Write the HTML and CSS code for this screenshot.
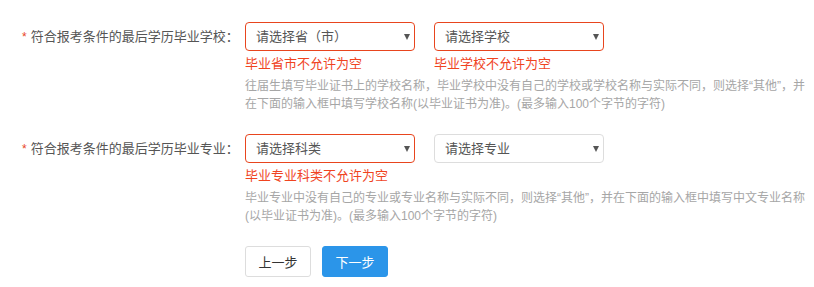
FILE: index.html
```html
<!DOCTYPE html>
<html lang="zh-CN">

<head>
  <meta charset="utf-8">
  <title>毕业信息</title>
  <link rel="stylesheet" href="styles.css">
</head>

<body>
  <form class="form">
    <div class="row">
      <label class="label"><span class="star">*</span>符合报考条件的最后学历毕业学校：</label>
      <div class="field">
        <div class="selects">
          <div class="pick">
            <div class="select error"><span>请选择省（市）</span><i class="caret"></i></div>
            <p class="msg">毕业省市不允许为空</p>
          </div>
          <div class="pick">
            <div class="select error"><span>请选择学校</span><i class="caret"></i></div>
            <p class="msg">毕业学校不允许为空</p>
          </div>
        </div>
        <p class="help">往届生填写毕业证书上的学校名称，毕业学校中没有自己的学校或学校名称与实际不同，则选择“其他”，并在下面的输入框中填写学校名称(以毕业证书为准)。(最多输入100个字节的字符)</p>
      </div>
    </div>
    <div class="row">
      <label class="label"><span class="star">*</span>符合报考条件的最后学历毕业专业：</label>
      <div class="field">
        <div class="selects">
          <div class="pick">
            <div class="select error"><span>请选择科类</span><i class="caret"></i></div>
            <p class="msg">毕业专业科类不允许为空</p>
          </div>
          <div class="pick">
            <div class="select"><span>请选择专业</span><i class="caret"></i></div>
          </div>
        </div>
        <p class="help">毕业专业中没有自己的专业或专业名称与实际不同，则选择“其他”，并在下面的输入框中填写中文专业名称(以毕业证书为准)。(最多输入100个字节的字符)</p>
      </div>
    </div>
    <div class="actions">
      <button type="button" class="btn">上一步</button>
      <button type="button" class="btn primary">下一步</button>
    </div>
  </form>
</body>

</html>
```

FILE: styles.css
```css
html,
body {
  margin: 0;
  background: #fff;
}

body {
  font-family: "Liberation Sans", "Noto Sans CJK SC", sans-serif;
  font-size: 13px;
  color: #555;
}

.form {
  padding-top: 22px;
}

.row {
  display: flex;
  margin-bottom: 21px;
}

.label {
  width: 245px;
  box-sizing: border-box;
  padding-left: 22px;
  line-height: 29px;
  color: #555;
  flex-shrink: 0;
}

.star {
  color: #e8451e;
  margin-right: 4px;
  font-size: 12px;
}

.field {
  width: 565px;
}

.selects {
  display: flex;
  gap: 19px;
}

.pick {
  width: 170px;
}

.select {
  height: 29px;
  box-sizing: border-box;
  border: 1px solid #ddd;
  border-radius: 4px;
  padding: 0 4px 0 10px;
  display: flex;
  align-items: center;
  justify-content: space-between;
  color: #555;
  line-height: 27px;
}

.select.error {
  border-color: #e8451e;
}

.caret {
  width: 0;
  height: 0;
  border-left: 3.5px solid transparent;
  border-right: 3.5px solid transparent;
  border-top: 6px solid #555;
}

.msg {
  margin: 4px 0 0;
  line-height: 18px;
  color: #f0441f;
  white-space: nowrap;
}

.help {
  margin: 4px 0 0;
  font-size: 12px;
  line-height: 18px;
  color: #a6a6a6;
}

.actions {
  display: flex;
  gap: 11px;
  padding-left: 245px;
}

.btn {
  width: 66px;
  height: 31px;
  border: 1px solid #ddd;
  border-radius: 3px;
  background: #fff;
  color: #333;
  font-family: inherit;
  font-size: 13px;
  padding: 0;
}

.btn.primary {
  background: #2b95e9;
  border-color: #2b95e9;
  color: #fff;
}
```
